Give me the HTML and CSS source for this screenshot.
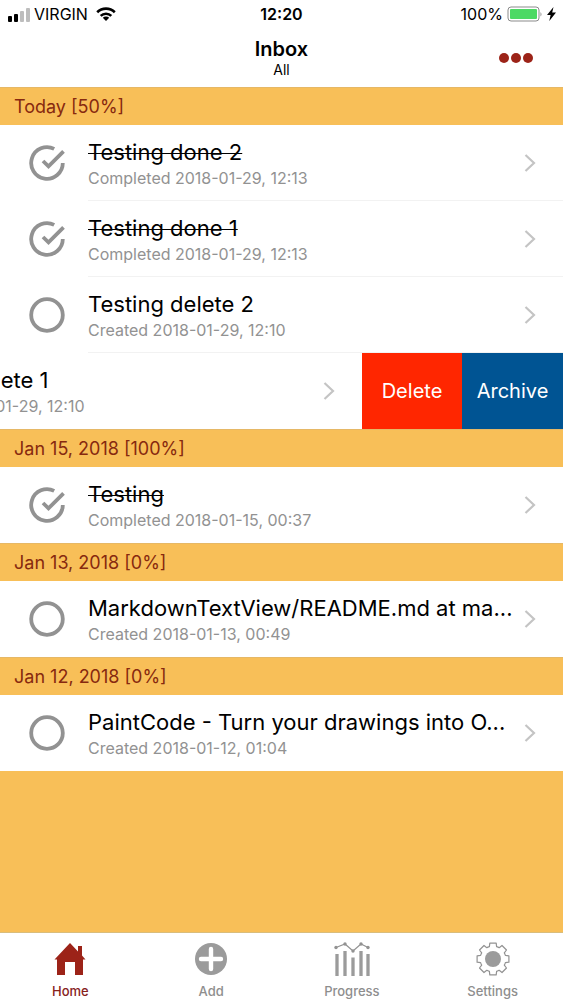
FILE: index.html
```html
<!DOCTYPE html>
<html lang="en">
<head>
<meta charset="utf-8">
<meta name="viewport" content="width=device-width, initial-scale=1">
<title>Inbox</title>
<link rel="stylesheet" href="styles.css">
</head>
<body>
<svg class="defs" aria-hidden="true">
  <symbol id="ring" viewBox="0 0 36 36"><circle cx="18" cy="18" r="15.8" fill="none" stroke="currentColor" stroke-width="3.8"/></symbol>
  <symbol id="done" viewBox="0 0 36 36"><g fill="none" stroke="currentColor" stroke-width="3.8"><path d="M25.2 3.9A15.8 15.8 0 1 0 33.8 18"/><path d="M14 16l5.500 5.300L34.500 6.300"/></g></symbol>
  <symbol id="chevron" viewBox="0 0 12 20"><path d="M1.500 2l8.500 8-8.500 8" fill="none" stroke="currentColor" stroke-width="2.200"/></symbol>
</svg>

<header class="top">
  <div class="status">
    <div class="status-left">
      <svg width="23" height="15" viewBox="0 0 23 15"><rect x="1" y="9" width="4" height="6" rx="1"/><rect x="7" y="7" width="4" height="8" rx="1"/><g fill="#bdbdbd"><rect x="13" y="4" width="4" height="11" rx="1"/><rect x="19" y="1" width="4" height="14" rx="1"/></g></svg>
      <span>VIRGIN</span>
      <svg class="wifi" width="20" height="14" viewBox="0 0 20 14"><g fill="none" stroke="#000" stroke-width="2.600"><path d="M1.200 5.200a12.600 12.600 0 0 1 17.600 0"/><path d="M4.700 8.900a7.600 7.600 0 0 1 10.600 0"/></g><path d="M10 14L6.800 10.800a4.600 4.600 0 0 1 6.400 0z"/></svg>
    </div>
    <strong class="clock">12:20</strong>
    <div class="status-right">
      <span>100%</span>
      <svg width="36" height="16" viewBox="0 0 36 16"><rect x="1" y="1" width="31" height="14" rx="3" fill="#fff" stroke="#8b8b8b"/><rect x="3" y="3" width="27" height="10" rx="1" fill="#4cd964"/><path d="M33.500 6v4.500q2-2.200 0-4.500z" fill="#8b8b8b"/></svg>
      <svg width="9" height="14" viewBox="0 0 9 14"><path d="M6.500 0L0 8h3.600L2.300 14 9 5.600H5.200z"/></svg>
    </div>
  </div>
  <div class="navbar">
    <div class="heading"><h1>Inbox</h1><p>All</p></div>
    <button class="more" type="button" aria-label="More"><svg width="36" height="12" viewBox="0 0 36 12" fill="#9c2318"><circle cx="6" cy="6" r="5"/><circle cx="18" cy="6" r="5"/><circle cx="30" cy="6" r="5"/></svg></button>
  </div>
</header>

<main class="list">
  <section>
    <h2>Today [50%]</h2>
    <ul>
      <li class="row"><div class="item is-done">
        <label class="check"><input type="checkbox" checked aria-label="Testing done 2"><svg><use href="#done"/></svg></label>
        <a class="body" href="#"><span class="text"><span class="title">Testing done 2</span><span class="meta">Completed 2018-01-29, 12:13</span></span><svg class="chevron"><use href="#chevron"/></svg></a>
      </div></li>
      <li class="row"><div class="item is-done">
        <label class="check"><input type="checkbox" checked aria-label="Testing done 1"><svg><use href="#done"/></svg></label>
        <a class="body" href="#"><span class="text"><span class="title">Testing done 1</span><span class="meta">Completed 2018-01-29, 12:13</span></span><svg class="chevron"><use href="#chevron"/></svg></a>
      </div></li>
      <li class="row"><div class="item">
        <label class="check"><input type="checkbox" aria-label="Testing delete 2"><svg><use href="#ring"/></svg></label>
        <a class="body" href="#"><span class="text"><span class="title">Testing delete 2</span><span class="meta">Created 2018-01-29, 12:10</span></span><svg class="chevron"><use href="#chevron"/></svg></a>
      </div></li>
      <li class="row row-swiped"><div class="item">
        <label class="check"><input type="checkbox" aria-label="Testing delete 1"><svg><use href="#ring"/></svg></label>
        <a class="body" href="#"><span class="text"><span class="title">Testing delete 1</span><span class="meta">Created 2018-01-29, 12:10</span></span><svg class="chevron"><use href="#chevron"/></svg></a>
      </div>
      <button class="action delete" type="button">Delete</button>
      <button class="action archive" type="button">Archive</button></li>
    </ul>
  </section>
  <section>
    <h2>Jan 15, 2018 [100%]</h2>
    <ul>
      <li class="row"><div class="item is-done">
        <label class="check"><input type="checkbox" checked aria-label="Testing"><svg><use href="#done"/></svg></label>
        <a class="body" href="#"><span class="text"><span class="title">Testing</span><span class="meta">Completed 2018-01-15, 00:37</span></span><svg class="chevron"><use href="#chevron"/></svg></a>
      </div></li>
    </ul>
  </section>
  <section>
    <h2>Jan 13, 2018 [0%]</h2>
    <ul>
      <li class="row"><div class="item">
        <label class="check"><input type="checkbox" aria-label="MarkdownTextView"><svg><use href="#ring"/></svg></label>
        <a class="body" href="#"><span class="text"><span class="title">MarkdownTextView/README.md at ma...</span><span class="meta">Created 2018-01-13, 00:49</span></span><svg class="chevron"><use href="#chevron"/></svg></a>
      </div></li>
    </ul>
  </section>
  <section>
    <h2>Jan 12, 2018 [0%]</h2>
    <ul>
      <li class="row"><div class="item">
        <label class="check"><input type="checkbox" aria-label="PaintCode"><svg><use href="#ring"/></svg></label>
        <a class="body" href="#"><span class="text"><span class="title">PaintCode - Turn your drawings into O...</span><span class="meta">Created 2018-01-12, 01:04</span></span><svg class="chevron"><use href="#chevron"/></svg></a>
      </div></li>
    </ul>
  </section>
</main>

<nav class="tabs">
  <a class="tab is-active" href="#"><svg viewBox="0 0 34 34"><path d="M17 1L1.500 17.500H4V33h8V20h10v13h8V17.500h2.500L29 13.500V4h-4v5.500z" fill="#9c2318"/></svg>Home</a>
  <a class="tab" href="#"><svg viewBox="0 0 34 34"><circle cx="17" cy="17" r="16" fill="#9b9b9b"/><path d="M17 7v20M7 17h20" stroke="#fff" stroke-width="4.400" stroke-linecap="round"/></svg>Add</a>
  <a class="tab" href="#"><svg class="chart" viewBox="0 0 38 34"><path d="M4 12v22M12 9v25M20 15.500V34M28 9v25M35 12v22" stroke="#9b9b9b" stroke-width="3.300"/><path d="M3 5.500L12 2l8 7 8-7 7 3.500" fill="none" stroke="#929292" stroke-width="1.200"/><g fill="#929292"><circle cx="3" cy="5.500" r="1.700"/><circle cx="12" cy="2" r="1.700"/><circle cx="20" cy="9" r="1.700"/><circle cx="28" cy="2" r="1.700"/><circle cx="35" cy="5.500" r="1.700"/></g></svg>Progress</a>
  <a class="tab" href="#"><svg viewBox="-17 -17 34 34"><circle r="8" fill="#9b9b9b"/><path fill="none" stroke="#929292" stroke-width="1.200" stroke-linejoin="round" d="M-3.200-15.900H3.200L3.600-12.400Q5.300-11.900 6.200-11.300L9-13.500 13.500-9 11.300-6.200Q11.900-5.300 12.400-3.600L15.900-3.200V3.200L12.400 3.600Q11.900 5.300 11.300 6.200L13.500 9 9 13.500 6.200 11.300Q5.300 11.900 3.600 12.400L3.200 15.900H-3.200L-3.600 12.400Q-5.300 11.900-6.200 11.300L-9 13.500-13.500 9-11.300 6.200Q-11.900 5.300-12.400 3.600L-15.900 3.200V-3.200L-12.400-3.600Q-11.900-5.300-11.300-6.200L-13.500-9-9-13.500-6.200-11.300Q-5.300-11.900-3.600-12.400Z"/></svg>Settings</a>
</nav>
</body>
</html>
```

FILE: styles.css
```css
* { box-sizing: border-box; }

body {
  margin: 0;
  min-height: 100vh;
  display: flex;
  flex-direction: column;
  background: #f8bf58;
  color: #000;
  font-family: Inter, "Liberation Sans", sans-serif;
}

h1, h2, p, ul { margin: 0; padding: 0; font-weight: 400; }
ul { list-style: none; }
a { color: inherit; text-decoration: none; }
button { border: 0; padding: 0; background: none; font: inherit; cursor: pointer; }
svg { display: block; flex: none; }
.defs { position: absolute; width: 0; height: 0; }

.top { background: #fff; }

.status {
  display: grid;
  grid-template-columns: 1fr auto 1fr;
  align-items: center;
  height: 28px;
  padding: 0 7px;
  font-size: 16px;
  line-height: 20px;
}
.status-left, .status-right { display: flex; align-items: center; gap: 4px; }
.status-left .wifi { margin-left: 4px; }
.status-right { justify-content: flex-end; }
.clock { font-weight: 600; }

.navbar {
  display: grid;
  grid-template-columns: 1fr auto 1fr;
  align-items: center;
  height: 59px;
  padding: 0 29px;
}
.heading { grid-column: 2; text-align: center; }
.heading h1 { font-size: 20px; line-height: 24px; font-weight: 600; }
.heading p { font-size: 14px; line-height: 18px; }
.more { justify-self: end; }

.list { flex: 1; background: #f8bf58; }
.list h2 {
  padding: 0 14px;
  border-top: 1px solid #e6b866;
  color: #87290f;
  font-size: 18px;
  line-height: 37px;
}

.row { display: flex; height: 76px; overflow: hidden; background: #fff; }
.row-swiped { justify-content: flex-end; }
.item { display: flex; flex: 0 0 100%; min-width: 0; }

.check {
  display: grid;
  align-items: center;
  justify-items: start;
  width: 88px;
  padding-left: 29px;
  color: #929292;
}
.check input, .check svg { grid-area: 1 / 1; width: 36px; height: 36px; margin: 0; }
.check input { appearance: none; border-radius: 50%; }

.body {
  display: flex;
  flex: 1;
  align-items: center;
  min-width: 0;
  padding-right: 27px;
  border-bottom: 1px solid #f2f2f2;
}
.row:last-child .body { border-bottom-color: #fff; }
.text { display: flex; flex: 1; flex-direction: column; gap: 2px; min-width: 0; }
.title {
  overflow: hidden;
  font-size: 22px;
  line-height: 28px;
  text-overflow: ellipsis;
  white-space: nowrap;
}
.is-done .title { text-decoration: line-through; text-decoration-thickness: 1px; }
.meta { color: #929292; font-size: 16px; line-height: 20px; }
.chevron { width: 12px; height: 20px; color: #c4c4c4; }

.action { flex: none; color: #fff; font-size: 20px; }
.delete { width: 100px; background: #ff2600; }
.archive { width: 101px; background: #005493; }

.tabs {
  display: grid;
  grid-template-columns: repeat(4, 1fr);
  padding-top: 9px;
  border-top: 1px solid #d9bd7c;
  background: #fff;
}
.tab {
  display: flex;
  flex-direction: column;
  align-items: center;
  gap: 6px;
  color: #8e8e8e;
  font-size: 13px;
  line-height: 18px;
  font-weight: 500;
}
.tab svg { width: 34px; height: 34px; }
.tab .chart { width: 38px; }
.is-active { color: #87221c; }
```
